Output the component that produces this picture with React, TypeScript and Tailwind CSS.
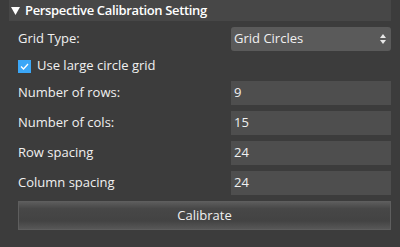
import React, { useState } from 'react';

const rows = [
  { label: 'Number of rows:', value: '9' },
  { label: 'Number of cols:', value: '15' },
  { label: 'Row spacing', value: '24' },
  { label: 'Column spacing', value: '24' },
];

const App: React.FC = () => {
  const [large, setLarge] = useState(true);

  return (
    <div className="w-[400px] h-[247px] bg-[#3c3c3c] text-[#f0f0f0] text-[13px] font-['Open_Sans','Noto_Sans',sans-serif] overflow-hidden">
      <div className="mx-[9px] h-[21px] bg-[#474747] flex items-center gap-[5px] pl-[2px]">
        <svg width="9" height="8" viewBox="0 0 9 8">
          <path d="M0 0 H9 L4.5 8 Z" fill="#ffffff" />
        </svg>
        <span className="font-semibold text-white tracking-[-0.35px]">Perspective Calibration Setting</span>
      </div>

      <div className="pl-[18px] pr-[9px] pt-[6px] flex flex-col">
        <div className="flex items-center h-[24px]">
          <span className="w-[213px]">Grid Type:</span>
          <div className="flex-1 h-[24px] bg-[#5a5a5a] rounded-[3px] flex items-center justify-between pl-[3px] pr-[5px]">
            <span>Grid Circles</span>
            <svg width="6" height="10" viewBox="0 0 6 10">
              <path d="M3 0 L6 4 H0 Z M0 6 H6 L3 10 Z" fill="#e8e8e8" />
            </svg>
          </div>
        </div>

        <label className="flex items-center gap-[6px] h-[24px] mt-[3px] cursor-pointer">
          <span
            className="w-[13px] h-[13px] bg-[#3ba7f7] flex items-center justify-center"
            onClick={() => setLarge(!large)}
          >
            {large && (
              <svg width="9" height="7" viewBox="0 0 9 7">
                <path d="M1 3.5 L3.5 6 L8 1" stroke="#ffffff" strokeWidth="1.3" fill="none" />
              </svg>
            )}
          </span>
          <span>Use large circle grid</span>
        </label>

        <div className="flex flex-col gap-[6px] mt-[3px]">
          {rows.map((r) => (
            <div key={r.label} className="flex items-center h-[24px]">
              <span className="w-[213px]">{r.label}</span>
              <div className="flex-1 h-[24px] bg-[#4e4e4e] flex items-center pl-[3px]">
                {r.value}
              </div>
            </div>
          ))}
        </div>

        <button className="mt-[6px] h-[29px] w-full border border-[#5e5e5e] bg-[linear-gradient(to_bottom,#5c5c5c_0%,#474747_25%,#434343_70%,#575757_100%)] text-[#f0f0f0] flex items-center justify-center">
          Calibrate
        </button>
      </div>
    </div>
  );
};

export default App;
